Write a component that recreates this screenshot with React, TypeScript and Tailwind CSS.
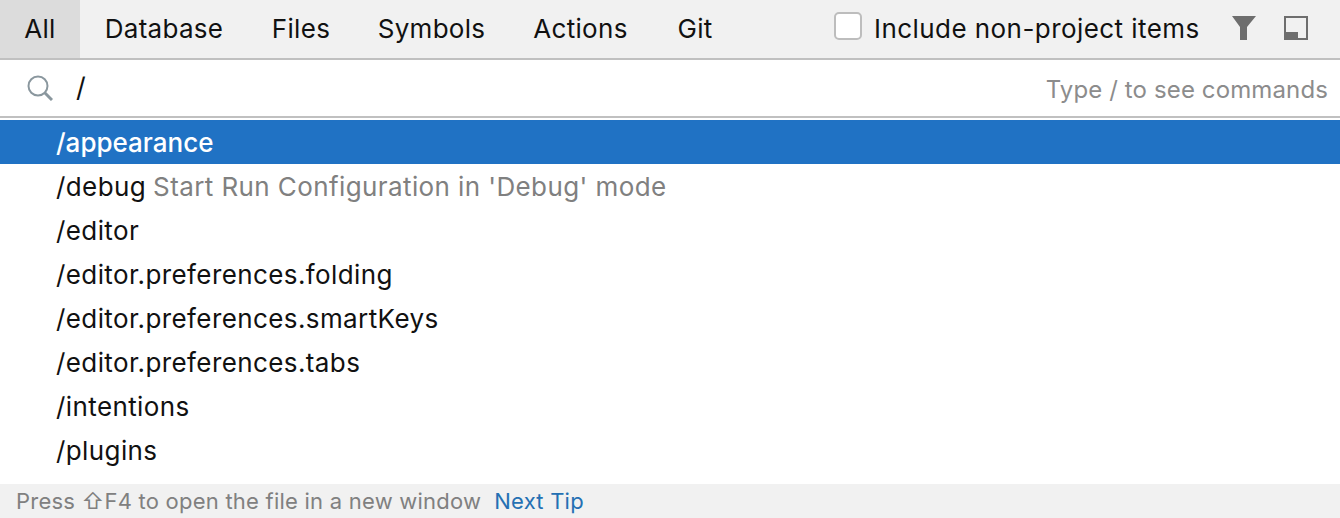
import React from "react";

function Tab({ label, active, cls }: { label: string; active?: boolean; cls: string }) {
  return (
    <div className={`flex h-full items-center justify-center pb-[2px] text-[26px] tracking-[0.3px] text-[#111] ${active ? "bg-[#dcdcdc]" : ""} ${cls}`}>
      {label}
    </div>
  );
}

function Row({ name, hint, selected }: { name: string; hint?: string; selected?: boolean }) {
  return (
    <div className={`flex h-11 items-center pl-[56px] text-[26px] ${selected ? "bg-[#2072c4] font-medium tracking-[0px] text-white" : "tracking-[0.4px] text-[#111]"}`}>
      <span>{name}</span>
      {hint && <span className="ml-[7px] text-[#808080]">{hint}</span>}
    </div>
  );
}

export default function App() {
  return (
    <div className="flex h-[518px] w-[1340px] flex-col overflow-hidden bg-white font-['Inter','Liberation_Sans',sans-serif]">
      <div className="flex h-[60px] shrink-0 items-stretch border-b-2 border-[#c0c0c0] bg-[#f1f1f1]">
        <div className="flex h-[58px]">
          <Tab label="All" active cls="w-[80px]" />
          <Tab label="Database" cls="ml-[25px] w-[118px]" />
          <Tab label="Files" cls="ml-[49px] w-[58px]" />
          <Tab label="Symbols" cls="ml-[48px] w-[107px]" />
          <Tab label="Actions" cls="ml-[48px] w-[95px]" />
          <Tab label="Git" cls="ml-[49px] w-[36px]" />
        </div>
        <div className="ml-[121px] flex h-[58px] items-center pb-[2px]">
          <div className="mb-[4px] h-[28px] w-[28px] rounded-[5px] border-2 border-[#bdbdbd] bg-white" />
          <span className="ml-[12px] text-[26px] tracking-[0.44px] text-[#111]">Include non-project items</span>
          <svg className="ml-[32px]" width="24" height="24" viewBox="0 0 24 24">
            <path d="M0 0H24L15 11V24H8V11Z" fill="#6e6e6e" />
          </svg>
          <svg className="ml-[28px]" width="24" height="24" viewBox="0 0 24 24">
            <path fillRule="evenodd" d="M0 0H24V24H0ZM2 2V16H14V22H22V2Z" fill="#6e6e6e" />
          </svg>
        </div>
      </div>
      <div className="flex h-[58px] shrink-0 items-center border-b-2 border-[#c0c0c0] pl-[27px] pr-[12px]">
        <svg width="26" height="26" viewBox="0 0 26 26" fill="none" stroke="#8a979e" strokeWidth="2">
          <circle cx="11" cy="11" r="9.5" />
          <path d="M18 18L25 25" strokeWidth="3" />
        </svg>
        <span className="ml-[23px] text-[27px] text-[#111]">/</span>
        <span className="ml-auto pt-[4px] text-[24px] tracking-[0.12px] text-[#8c8c8c]">Type / to see commands</span>
      </div>
      <div className="flex-1 pt-[2px]">
        <Row name="/appearance" selected />
        <Row name="/debug" hint="Start Run Configuration in 'Debug' mode" />
        <Row name="/editor" />
        <Row name="/editor.preferences.folding" />
        <Row name="/editor.preferences.smartKeys" />
        <Row name="/editor.preferences.tabs" />
        <Row name="/intentions" />
        <Row name="/plugins" />
      </div>
      <div className="flex h-[34px] shrink-0 items-center bg-[#f1f1f1] pl-[16px] text-[22px] tracking-[0.23px] text-[#808080]">
        <span>Press ⇧F4 to open the file in a new window</span>
        <span className="ml-[13px] text-[#2470b3]">Next Tip</span>
      </div>
    </div>
  );
}
